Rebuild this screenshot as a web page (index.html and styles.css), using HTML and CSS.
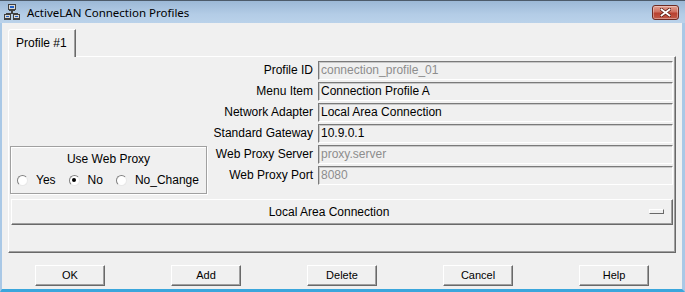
FILE: index.html
```html
<!DOCTYPE html>
<html lang="en">
<head>
    <meta charset="UTF-8">
    <title>ActiveLAN Connection Profiles</title>
    <link rel="stylesheet" href="styles.css">
</head>
<body>
    <div class="window">
        <div class="titlebar">
            <svg class="app-icon" width="16" height="16" viewBox="0 0 16 16">
                <!-- top computer -->
                <rect x="4.5" y="0.5" width="7" height="5" fill="#d8d8d8" stroke="#404040"/>
                <rect x="6" y="2" width="4" height="2" fill="#1f5fc4"/>
                <rect x="5" y="6" width="6" height="1" fill="#404040"/>
                <!-- wires -->
                <rect x="7" y="7" width="2" height="2" fill="#404040"/>
                <rect x="2" y="9" width="12" height="1" fill="#404040"/>
                <!-- left computer -->
                <rect x="0.5" y="10.5" width="6" height="4" fill="#d8d8d8" stroke="#404040"/>
                <rect x="2" y="12" width="3" height="1" fill="#1f5fc4"/>
                <rect x="0" y="15" width="7" height="1" fill="#404040"/>
                <!-- right computer -->
                <rect x="9.5" y="10.5" width="6" height="4" fill="#d8d8d8" stroke="#404040"/>
                <rect x="11" y="12" width="3" height="1" fill="#1f5fc4"/>
                <rect x="9" y="15" width="7" height="1" fill="#404040"/>
            </svg>
            <span class="title">ActiveLAN Connection Profiles</span>
            <div class="close-btn">
                <svg width="11" height="9" viewBox="0 0 11 9">
                    <path d="M1.5 1.5 L9.5 7.5 M9.5 1.5 L1.5 7.5" stroke="#5a1a12" stroke-width="3.4" stroke-linecap="square"/>
                    <path d="M1.5 1.5 L9.5 7.5 M9.5 1.5 L1.5 7.5" stroke="#ffffff" stroke-width="1.8" stroke-linecap="square"/>
                </svg>
            </div>
        </div>

        <div class="client">
            <div class="tabs">
                <div class="tab">Profile #1</div>
            </div>

            <div class="panel">
                <div class="top">
                    <div class="proxy-box">
                        <div class="box-title">Use Web Proxy</div>
                        <div class="radios">
                            <span class="radio"><span class="circle"></span>Yes</span>
                            <span class="radio"><span class="circle checked"></span>No</span>
                            <span class="radio"><span class="circle"></span>No_Change</span>
                        </div>
                    </div>

                    <div class="fields">
                        <span class="label">Profile ID</span>
                        <div class="field disabled">connection_profile_01</div>
                        <span class="label">Menu Item</span>
                        <div class="field">Connection Profile A</div>
                        <span class="label">Network Adapter</span>
                        <div class="field">Local Area Connection</div>
                        <span class="label">Standard Gateway</span>
                        <div class="field">10.9.0.1</div>
                        <span class="label">Web Proxy Server</span>
                        <div class="field disabled">proxy.server</div>
                        <span class="label">Web Proxy Port</span>
                        <div class="field disabled">8080</div>
                    </div>
                </div>

                <div class="combo">
                    <span class="combo-text">Local Area Connection</span>
                    <span class="combo-mark"></span>
                </div>
            </div>

            <div class="buttons">
                <button>OK</button>
                <button>Add</button>
                <button>Delete</button>
                <button>Cancel</button>
                <button>Help</button>
            </div>
        </div>
    </div>
</body>
</html>
```

FILE: styles.css
```css
* {
    box-sizing: border-box;
}
body {
    margin: 0;
    background-color: #f0f0f0;
    font-family: "Liberation Sans", Arial, sans-serif;
    font-size: 12px;
    color: #000;
}
.window {
    width: 685px;
    height: 292px;
    display: flex;
    flex-direction: column;
}
.titlebar {
    height: 23px;
    display: flex;
    align-items: center;
    padding: 0 6px 0 4px;
    border-top: 1px solid #4d5b6a;
    background: linear-gradient(#9cb8d6, #b3cce6 60%, #bad2ea);
}
.app-icon {
    flex-shrink: 0;
}
.title {
    margin-left: 7px;
    font-family: "Noto Sans", sans-serif;
    font-size: 11.5px;
    color: #000;
}
.close-btn {
    margin-left: auto;
    width: 27px;
    height: 15px;
    display: flex;
    align-items: center;
    justify-content: center;
    border: 1px solid #6e2a22;
    border-radius: 3px;
    background: linear-gradient(#e2a091, #cf7060 45%, #b8402f 55%, #c25a48);
    box-shadow: inset 0 0 0 1px rgba(255,255,255,0.35);
}
.client {
    flex: 1;
    display: flex;
    flex-direction: column;
    padding: 6px 6px 0 6px;
    background-color: #f0f0f0;
    border-left: 2px solid #a9c8e6;
    border-right: 3px solid #a9c8e6;
    border-bottom: 3px solid #3ba6dc;
}
.tabs {
    display: flex;
}
.tab {
    position: relative;
    z-index: 1;
    width: 68px;
    height: 28px;
    margin-bottom: -1px;
    padding: 0 0 2px 7px;
    display: flex;
    align-items: center;
    background-color: #f0f0f0;
    border-top: 1px solid #fff;
    border-left: 1px solid #fff;
    border-right: 1px solid #696969;
    border-top-left-radius: 3px;
    box-shadow: inset -1px 0 0 #a0a0a0;
}
.panel {
    padding: 4px 2px 27px 1px;
    border: 1px solid;
    border-color: #fff #696969 #696969 #fff;
    box-shadow: inset -1px -1px 0 #a0a0a0;
}
.top {
    display: flex;
    align-items: flex-end;
}
.proxy-box {
    width: 197px;
    height: 48px;
    padding: 5px 0 0 6px;
    border: 1px solid #a0a0a0;
    box-shadow: inset 1px 1px 0 #fff, 1px 1px 0 #fff;
}
.box-title {
    text-align: center;
    line-height: 14px;
    padding-right: 6px;
}
.radios {
    display: flex;
    gap: 13px;
    margin-top: 7px;
    line-height: 14px;
}
.radio {
    display: flex;
    align-items: center;
    gap: 8px;
}
.circle {
    width: 11px;
    height: 11px;
    border-radius: 50%;
    border: 1px solid;
    border-color: #808080 #e8e8e8 #e8e8e8 #808080;
    background-color: #fff;
    display: flex;
    align-items: center;
    justify-content: center;
}
.circle.checked::after {
    content: "";
    width: 4px;
    height: 4px;
    border-radius: 50%;
    background-color: #000;
}
.fields {
    flex: 1;
    display: grid;
    grid-template-columns: 1fr 355px;
    grid-auto-rows: 19px;
    row-gap: 2px;
    column-gap: 5px;
    padding-bottom: 9px;
}
.label {
    text-align: right;
    line-height: 19px;
}
.field {
    padding-left: 2px;
    line-height: 17px;
    border: 1px solid;
    border-color: #7a7a7a #fff #fff #7a7a7a;
    box-shadow: inset 1px 1px 0 #c8c8c8;
    white-space: nowrap;
    overflow: hidden;
}
.field.disabled {
    color: #8d8d8d;
}
.combo {
    height: 26px;
    margin: 5px 0 0 1px;
    display: flex;
    align-items: center;
    border: 1px solid;
    border-color: #fff #696969 #696969 #fff;
    box-shadow: inset -1px -1px 0 #a0a0a0;
}
.combo-text {
    flex: 1;
    text-align: center;
    padding-bottom: 1px;
}
.combo-mark {
    width: 15px;
    height: 5px;
    margin: 0 8px 1px 3px;
    border: 1px solid;
    border-color: #fff #696969 #696969 #fff;
}
.buttons {
    margin: 12px -6px 0 -6px;
    display: flex;
    justify-content: space-around;
}
button {
    width: 70px;
    height: 21px;
    padding: 0 0 1px 0;
    font-family: "Liberation Sans", Arial, sans-serif;
    font-size: 11px;
    color: #000;
    background-color: #f0f0f0;
    border: 1px solid;
    border-color: #fff #696969 #696969 #fff;
    box-shadow: inset -1px -1px 0 #a0a0a0;
}
```
